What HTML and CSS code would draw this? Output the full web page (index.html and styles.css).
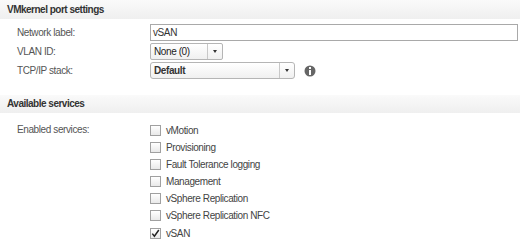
FILE: index.html
```html
<!DOCTYPE html>
<html>
<head>
<meta charset="utf-8">
<link rel="stylesheet" href="styles.css">
</head>
<body>
<div class="page">
  <div class="section-head">VMkernel port settings</div>
  <div class="form">
    <div class="row">
      <div class="label">Network label:</div>
      <div class="field"><div class="input">vSAN</div></div>
    </div>
    <div class="row">
      <div class="label">VLAN ID:</div>
      <div class="field">
        <div class="select vlan"><span class="value">None (0)</span><span class="arrow"><span class="tri"></span></span></div>
      </div>
    </div>
    <div class="row">
      <div class="label">TCP/IP stack:</div>
      <div class="field">
        <div class="select stack"><span class="value">Default</span><span class="arrow"><span class="tri"></span></span></div>
        <svg class="info" width="12" height="12" viewBox="0 0 12 12"><circle cx="6" cy="6" r="5.5" fill="#666"/><rect x="5" y="2" width="2" height="2" fill="#fff"/><rect x="5" y="5" width="2" height="5" fill="#fff"/></svg>
      </div>
    </div>
  </div>
  <div class="section-head second">Available services</div>
  <div class="services">
    <div class="label">Enabled services:</div>
    <div class="checks">
      <div class="check"><span class="box"></span>vMotion</div>
      <div class="check"><span class="box"></span>Provisioning</div>
      <div class="check"><span class="box"></span>Fault Tolerance logging</div>
      <div class="check"><span class="box"></span>Management</div>
      <div class="check"><span class="box"></span>vSphere Replication</div>
      <div class="check"><span class="box"></span>vSphere Replication NFC</div>
      <div class="check"><span class="box checked"><svg width="9" height="9" viewBox="0 0 9 9"><path d="M1.3 4.6 L3.4 7.2 L7.8 1" fill="none" stroke="#222" stroke-width="1.5"/></svg></span>vSAN</div>
    </div>
  </div>
</div>
</body>
</html>
```
FILE: styles.css
```css
html, body {
  margin: 0;
  padding: 0;
  background: #fff;
}
body {
  font-family: "Liberation Sans", Arial, sans-serif;
  font-size: 10px;
  letter-spacing: -0.4px;
  color: #444;
  width: 520px;
  height: 250px;
  overflow: hidden;
}
.page {
  display: flex;
  flex-direction: column;
}
.section-head {
  height: 19px;
  line-height: 19px;
  padding-left: 7px;
  background: linear-gradient(#fafafa, #efefef);
  font-weight: bold;
  color: #333;
  letter-spacing: -0.5px;
}
.section-head.second {
  margin-top: 16px;
  height: 18px;
  line-height: 18px;
}
.form {
  display: flex;
  flex-direction: column;
  padding-top: 5px;
  gap: 2px;
}
.row {
  display: flex;
  align-items: center;
  height: 17px;
}
.label {
  width: 133px;
  padding-left: 17px;
  color: #555;
}
.field {
  flex: 1;
  display: flex;
  align-items: center;
  padding-right: 2px;
}
.input {
  flex: 1;
  height: 15px;
  line-height: 15px;
  border: 1px solid #a9a9a9;
  padding-left: 2px;
  color: #333;
}
.select {
  display: flex;
  height: 15px;
  border: 1px solid #b5b5b5;
  border-radius: 2px;
  background: linear-gradient(#fff, #f0f0f0);
  font-weight: bold;
  color: #333;
}
.select .value {
  flex: 1;
  line-height: 15px;
  padding-left: 3px;
}
.select .arrow {
  width: 14px;
  border-left: 1px solid #c8c8c8;
  display: flex;
  align-items: center;
  justify-content: center;
}
.tri {
  width: 0;
  height: 0;
  border-left: 2.5px solid transparent;
  border-right: 2.5px solid transparent;
  border-top: 3px solid #333;
}
.vlan { width: 71px; }
.vlan .value { font-weight: normal; color: #222; }
.stack { width: 143px; border-radius: 3px; }
.info { margin-left: 9px; }
.services {
  display: flex;
  padding-top: 11px;
}
.services .label {
  line-height: 12px;
}
.checks {
  display: flex;
  flex-direction: column;
  gap: 5.2px;
}
.check {
  display: flex;
  align-items: center;
  height: 12px;
  color: #444;
}
.box {
  width: 9px;
  height: 9px;
  border: 1px solid #a0a0a0;
  background: linear-gradient(#fff, #e9e9e9);
  margin-right: 5px;
  display: flex;
  align-items: center;
  justify-content: center;
}
```
